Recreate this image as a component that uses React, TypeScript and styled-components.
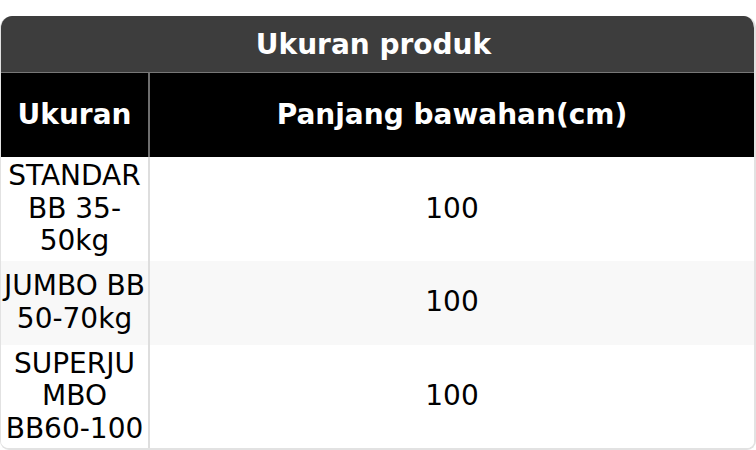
import React from "react";
import styled, { createGlobalStyle } from "styled-components";

const Global = createGlobalStyle`
  html, body { margin: 0; padding: 0; background: #fff; }
  body { padding-top: 16px; font-family: "DejaVu Sans", "Liberation Sans", sans-serif; }
`;

const Card = styled.div`
  width: 756px;
  box-sizing: border-box;
  border-radius: 12px 12px 9px 9px;
  overflow: hidden;
  border: 2px solid #e2e2e2;
  border-top: none;
  border-left-width: 1px;
  background: #fff;
`;

const Title = styled.div`
  background: #3d3d3d;
  color: #fff;
  font-weight: bold;
  font-size: 28px;
  height: 56px;
  padding-right: 8px;
  display: flex;
  align-items: center;
  justify-content: center;
  border-bottom: 1px solid #777;
`;

const Table = styled.table`
  width: 100%;
  border-collapse: collapse;
  table-layout: fixed;
  font-size: 28px;
  line-height: 32.5px;
`;

const HeadCell = styled.th<{ $first?: boolean }>`
  background: #000;
  color: #fff;
  font-weight: bold;
  height: 84px;
  padding: 0 3px;
  text-align: center;
  border-right: ${(p) => (p.$first ? "2px solid #6e6e6e" : "none")};
`;

const Row = styled.tr<{ $alt?: boolean }>`
  background: ${(p) => (p.$alt ? "#f8f8f8" : "#fff")};
`;

const Cell = styled.td<{ $first?: boolean }>`
  color: #000;
  text-align: center;
  vertical-align: middle;
  height: 78px;
  padding: 3px 3px;
  overflow-wrap: anywhere;
  word-break: break-word;
  border-right: ${(p) => (p.$first ? "2px solid #dedede" : "none")};
`;

const rows = [
  { size: "STANDAR BB 35-50kg", len: "100" },
  { size: "JUMBO BB 50-70kg", len: "100" },
  { size: "SUPERJUMBO BB60-100", len: "100" },
];

export default function App() {
  return (
    <>
      <Global />
      <Card>
        <Title>Ukuran produk</Title>
        <Table>
          <colgroup>
            <col style={{ width: 148 }} />
            <col />
          </colgroup>
          <thead>
            <tr>
              <HeadCell $first>Ukuran</HeadCell>
              <HeadCell>Panjang bawahan(cm)</HeadCell>
            </tr>
          </thead>
          <tbody>
            {rows.map((r, i) => (
              <Row key={i} $alt={i % 2 === 1}>
                <Cell $first>{r.size}</Cell>
                <Cell>{r.len}</Cell>
              </Row>
            ))}
          </tbody>
        </Table>
      </Card>
    </>
  );
}
